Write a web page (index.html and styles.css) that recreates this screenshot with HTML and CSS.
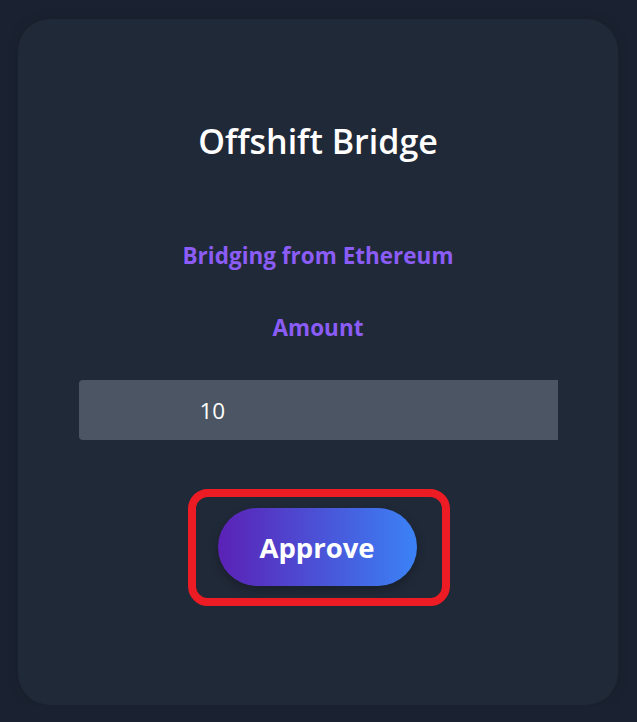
FILE: index.html
```html
<!DOCTYPE html>
<html lang="en">
<head>
  <meta charset="UTF-8">
  <meta name="viewport" content="width=device-width, initial-scale=1.0">
  <title>Offshift Bridge</title>
  <link rel="stylesheet" href="styles.css">
</head>
<body>

  <!-- Bridge Card -->
  <div class="card">
    <h1 class="title">Offshift Bridge</h1>
    <p class="label label-from">Bridging from Ethereum</p>
    <p class="label label-amount">Amount</p>
    <input class="amount-input" type="text" value="10">

    <!-- Highlighted action -->
    <div class="highlight">
      <button class="approve-btn">Approve</button>
    </div>
  </div>

</body>
</html>
```

FILE: styles.css
```css
body {
  margin: 0;
  padding: 0;
  background-color: #1a2231;
  font-family: "Open Sans", "Noto Sans", sans-serif;
}

.card {
  box-sizing: border-box;
  width: 600px;
  height: 686px;
  margin: 19px 0 0 18px;
  padding-top: 101px;
  display: flex;
  flex-direction: column;
  align-items: center;
  background-color: #202938;
  border-radius: 32px;
  box-shadow: 0 0 12px rgba(0, 0, 0, 0.15);
}

.title {
  margin: 0;
  font-size: 34px;
  line-height: 42px;
  font-weight: 600;
  color: #ffffff;
}

.label {
  margin: 0;
  font-size: 22.5px;
  line-height: 30px;
  font-weight: 700;
  color: #8b5cf6;
}

.label-from {
  margin-top: 79px;
}

.label-amount {
  margin-top: 42px;
}

.amount-input {
  box-sizing: border-box;
  width: 479px;
  height: 60px;
  margin-top: 37px;
  padding: 0 0 0 121px;
  border: none;
  border-radius: 4px 0 0 4px;
  background-color: #4b5563;
  color: #ffffff;
  font-family: "Open Sans", sans-serif;
  font-size: 22.5px;
  outline: none;
}

.highlight {
  box-sizing: border-box;
  width: 262px;
  height: 117px;
  margin-top: 49px;
  margin-left: 1px;
  padding: 11px 0 0 22px;
  border: 8px solid #ed1c24;
  border-radius: 20px;
}

.approve-btn {
  width: 199px;
  height: 78px;
  border: none;
  border-radius: 39px;
  background: linear-gradient(to right, #5b21b6, #3b82f6);
  color: #ffffff;
  font-family: "Open Sans", sans-serif;
  font-size: 27.5px;
  font-weight: 700;
  box-shadow: 0 4px 10px rgba(0, 0, 0, 0.25);
  cursor: pointer;
}
```
